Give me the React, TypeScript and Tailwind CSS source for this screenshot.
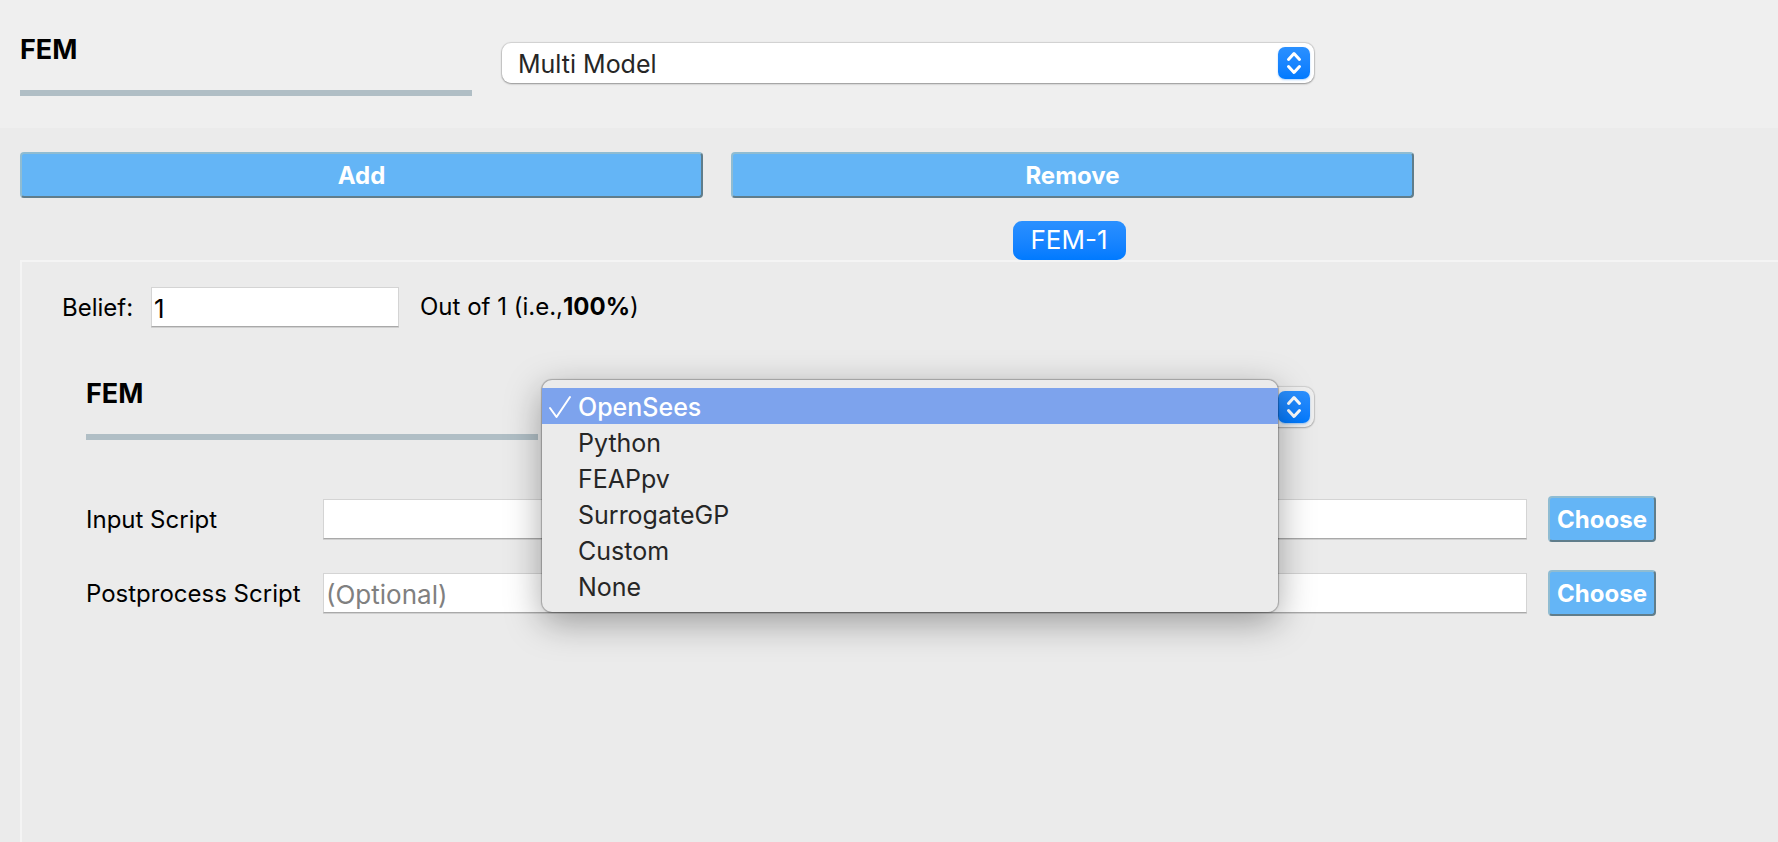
import { useState } from "react";

const FEM_OPTIONS = ["OpenSees", "Python", "FEAPpv", "SurrogateGP", "Custom", "None"];

function Stepper() {
  return (
    <span className="pointer-events-none absolute top-1 right-1 flex size-8 items-center justify-center rounded-[7px] bg-linear-to-b from-[#2a90ff] to-[#007aff] shadow-[0_1px_2px_rgba(0,122,255,0.35)]">
      <svg viewBox="0 0 32 32" className="size-8" fill="none" stroke="white" strokeWidth="3" strokeLinecap="round" strokeLinejoin="round" aria-hidden="true">
        <path d="M10.5 12.500 16 6.500l5.500 6M10.500 19.500l5.500 6 5.500-6" />
      </svg>
    </span>
  );
}

function SectionTitle({ htmlFor }: { htmlFor: string }) {
  return (
    <label htmlFor={htmlFor} className="block w-[452px] shrink-0 border-b-6 border-[#b0bec5] pb-6 text-[27px] leading-8 font-bold">
      FEM
    </label>
  );
}

function ActionButton({ children, className, label }: { children: string; className: string; label?: string }) {
  return (
    <button
      type="button"
      aria-label={label}
      className={`h-[46px] rounded-[4px] border-2 border-t-[#8fbcd2] border-r-[#607d8b] border-b-[#607d8b] border-l-[#8fbcd2] bg-[#64b5f6] pt-[2px] text-center text-2xl leading-7 font-bold text-white ${className}`}
    >
      {children}
    </button>
  );
}

const FIELD =
  "h-10 min-w-0 border border-[#d4d4d4] border-b-[#a9a9a9] bg-white px-[2px] pt-[2px] text-[26px] leading-8 outline-none shadow-[0_1px_0_#d0d0d0] placeholder:text-[#808080]";

function ScriptRow({ id, label, placeholder }: { id: string; label: string; placeholder?: string }) {
  return (
    <div className="flex items-center">
      <label htmlFor={id} className="w-[237px] shrink-0 pt-[2px] text-2xl leading-7 whitespace-nowrap">
        {label}
      </label>
      <input id={id} type="text" placeholder={placeholder} className={`${FIELD} flex-1`} />
      <ActionButton className="ml-[21px] w-[108px] shrink-0" label={`Choose ${label}`}>
        Choose
      </ActionButton>
    </div>
  );
}

export default function App() {
  const [selected, setSelected] = useState("OpenSees");
  const [belief, setBelief] = useState("1");

  return (
    <div className="flex min-h-screen flex-col bg-[#ebebeb] font-['Inter','Liberation_Sans',sans-serif] text-black">
      <header className="h-32 bg-[#efefef] pt-[34px] pl-5">
        <div className="flex max-w-[1294px] items-start gap-[30px]">
          <SectionTitle htmlFor="fem-type" />
          <div className="relative mt-[9px] min-w-0 flex-1">
            <select id="fem-type" className="block h-10 w-full appearance-none rounded-[9px] bg-white pt-[2px] pr-10 pl-4 text-[25px] leading-8 text-[#262626] shadow-[0_0_1px_1px_rgba(0,0,0,0.12),0_1px_2px_rgba(0,0,0,0.3)] outline-none">
              <option>Multi Model</option>
            </select>
            <Stepper />
          </div>
        </div>
      </header>

      <main className="flex flex-1 flex-col pt-6 pl-5">
        <div className="flex max-w-[1394px] gap-7">
          <ActionButton className="flex-1">Add</ActionButton>
          <ActionButton className="flex-1">Remove</ActionButton>
        </div>

        <div role="tablist" className="mt-[23px] flex justify-center pl-[340px]">
          <button type="button" role="tab" aria-selected="true" className="h-[39px] rounded-[9px] bg-linear-to-b from-[#2a90ff] to-[#007aff] px-[18px] pb-[2px] text-[26px] leading-8 text-white">
            FEM-1
          </button>
        </div>

        <section role="tabpanel" className="flex-1 border-t-2 border-l-2 border-[#f4f4f4] pt-[25px]">
          <div className="flex items-center pl-10 text-2xl leading-7">
            <label htmlFor="belief" className="w-[89px] shrink-0 pt-[2px]">
              Belief:
            </label>
            <input id="belief" type="text" value={belief} onChange={(e) => setBelief(e.target.value)} className={`${FIELD} w-[248px]`} />
            <p className="ml-[21px] whitespace-nowrap">
              Out of 1 (i.e.,<b>100%</b>)
            </p>
          </div>

          <div className="mt-[51px] flex max-w-[1292px] items-start gap-[26px] pl-16">
            <SectionTitle htmlFor="fem-model" />
            <div className="relative mt-[9px] min-w-0 flex-1">
              <select
                id="fem-model"
                value={selected}
                onChange={(e) => setSelected(e.target.value)}
                className="block h-10 w-full appearance-none rounded-[9px] bg-[#eeeeee] pt-[2px] pr-10 pl-4 text-[25px] leading-8 text-[#262626] shadow-[0_0_1px_1px_rgba(0,0,0,0.12),0_1px_2px_rgba(0,0,0,0.2)] outline-none"
              >
                {FEM_OPTIONS.map((option) => (
                  <option key={option}>{option}</option>
                ))}
              </select>
              <Stepper />
              <ul
                role="listbox"
                aria-label="FEM"
                className="absolute -top-[7px] right-9 -left-[22px] z-10 rounded-[10px] bg-[#ebebeb] py-2 shadow-[0_0_1px_1px_rgba(0,0,0,0.25),0_10px_36px_rgba(0,0,0,0.35)]"
              >
                {FEM_OPTIONS.map((option) => (
                  <li
                    key={option}
                    role="option"
                    aria-selected={option === selected}
                    onClick={() => setSelected(option)}
                    className="flex h-9 cursor-default items-center pt-[2px] pl-[6px] text-[25px] leading-8 text-[#262626] aria-selected:bg-[#7da3ed] aria-selected:font-medium aria-selected:text-white"
                  >
                    <span className="w-[30px] shrink-0">
                      {option === selected && (
                        <svg viewBox="0 0 24 24" className="size-6" fill="none" stroke="currentColor" strokeWidth="2" strokeLinecap="round" strokeLinejoin="round" aria-hidden="true">
                          <path d="M2 13 8.500 22 22 2" />
                        </svg>
                      )}
                    </span>
                    {option}
                  </li>
                ))}
              </ul>
            </div>
          </div>

          <div className="mt-14 flex max-w-[1634px] flex-col gap-7 pl-16">
            <ScriptRow id="input-script" label="Input Script" />
            <ScriptRow id="postprocess-script" label="Postprocess Script" placeholder="(Optional)" />
          </div>
        </section>
      </main>
    </div>
  );
}
